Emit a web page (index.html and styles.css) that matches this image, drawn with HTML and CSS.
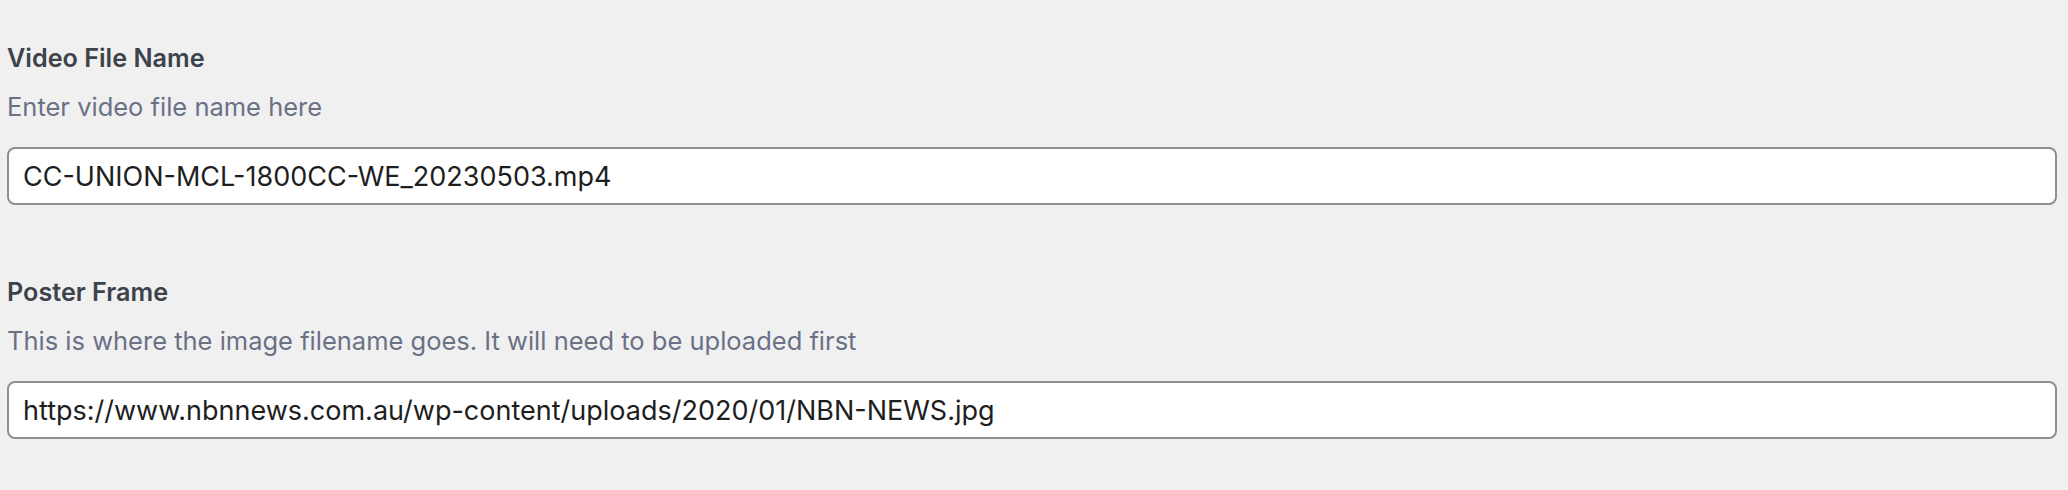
FILE: index.html
```html
<!DOCTYPE html>
<html lang="en">
<head>
<meta charset="utf-8">
<title>Video fields</title>
<link rel="stylesheet" href="styles.css">
</head>
<body>
<div class="fields">
  <div class="field">
    <label class="field-label" for="video-file">Video File Name</label>
    <p class="field-desc">Enter video file name here</p>
    <input class="field-input" id="video-file" type="text" value="CC-UNION-MCL-1800CC-WE_20230503.mp4">
  </div>
  <div class="field">
    <label class="field-label" for="poster-frame">Poster Frame</label>
    <p class="field-desc">This is where the image filename goes. It will need to be uploaded first</p>
    <input class="field-input" id="poster-frame" type="text" value="https://www.nbnnews.com.au/wp-content/uploads/2020/01/NBN-NEWS.jpg">
  </div>
</div>
</body>
</html>
```
FILE: styles.css
```css
html, body {
  margin: 0;
  padding: 0;
  background: #f0f0f1;
}
body {
  font-family: Inter, "Noto Sans", "Liberation Sans", sans-serif;
}
.fields {
  padding: 42px 11px 0 7px;
}
.field {
  display: flex;
  flex-direction: column;
}
.field + .field {
  margin-top: 71px;
}
.field-label {
  font-size: 25.2px;
  line-height: 32px;
  font-weight: 560;
  color: #3c434a;
}
.field-desc {
  margin: 17px 0 0;
  font-size: 25.5px;
  line-height: 32px;
  color: #6b7185;
}
.field-input {
  margin: 24px 0 0;
  box-sizing: border-box;
  width: 100%;
  height: 58px;
  padding: 0 14px;
  border: 2px solid #8c8f94;
  border-radius: 8px;
  background: #fff;
  font-family: Inter, "Noto Sans", "Liberation Sans", sans-serif;
  font-size: 27px;
  color: #1e1e1e;
  outline: none;
}
```
